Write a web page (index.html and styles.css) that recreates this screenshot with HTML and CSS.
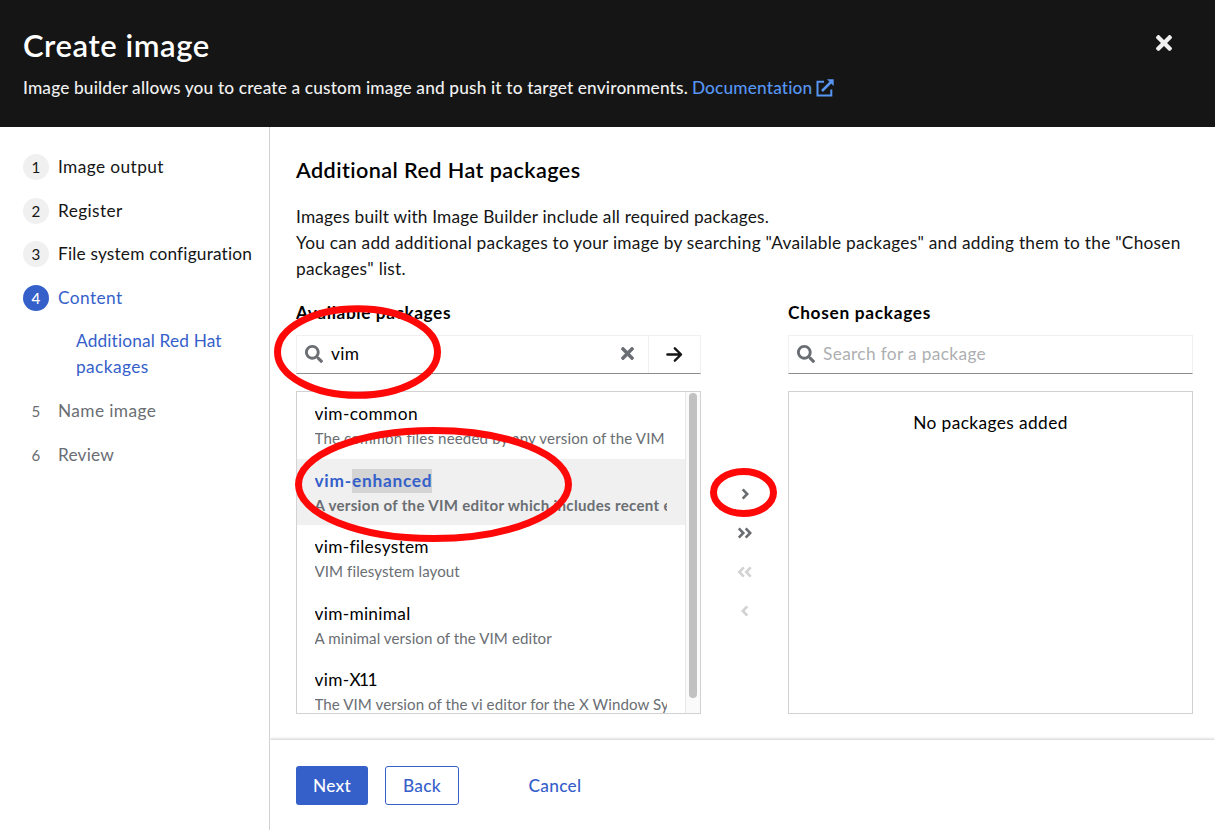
FILE: index.html
```html
<!DOCTYPE html>
<html lang="en">
<head>
<meta charset="utf-8">
<title>Create image</title>
<link rel="stylesheet" href="styles.css">
</head>
<body>
<svg class="defs" width="0" height="0">
  <symbol id="search" viewBox="0 0 512 512"><path d="M505 442.7L405.3 343c-4.5-4.5-10.6-7-17-7H372c27.6-35.3 44-79.7 44-128C416 93.1 322.9 0 208 0S0 93.1 0 208s93.1 208 208 208c48.3 0 92.7-16.4 128-44v16.3c0 6.4 2.5 12.5 7 17l99.7 99.7c9.4 9.4 24.6 9.4 33.9 0l28.3-28.3c9.4-9.4 9.4-24.6.1-34zM208 336c-70.7 0-128-57.2-128-128 0-70.7 57.2-128 128-128 70.7 0 128 57.2 128 128 0 70.7-57.2 128-128 128z"/></symbol>
  <symbol id="times" viewBox="0 80 352 352"><path d="M242.72 256l100.07-100.07c12.28-12.28 12.28-32.19 0-44.48l-22.24-22.24c-12.28-12.28-32.19-12.28-44.48 0L176 189.28 75.93 89.21c-12.28-12.28-32.19-12.28-44.48 0L9.21 111.45c-12.28 12.28-12.28 32.19 0 44.48L109.28 256 9.21 356.07c-12.28 12.28-12.28 32.19 0 44.48l22.24 22.24c12.28 12.28 32.2 12.28 44.48 0L176 322.72l100.07 100.07c12.28 12.28 32.2 12.28 44.48 0l22.24-22.24c12.28-12.28 12.28-32.19 0-44.48L242.72 256z"/></symbol>
</svg>
<div class="wizard">
  <header class="header">
    <div class="header-text">
      <h1 class="title">Create image</h1>
      <p class="description"><span class="desc-text">Image builder allows you to create a custom image and push it to target environments.</span><a class="doc-link"><span>Documentation</span><svg class="icon-external" viewBox="0 0 18 18"><path d="M8 2.7H1.5v13.8h13.8V10.500" fill="none" stroke="currentColor" stroke-width="2"/><path d="M6 12L15 3" fill="none" stroke="currentColor" stroke-width="2.500"/><path d="M11 .2h6.700v6.700z" fill="currentColor"/></svg></a></p>
    </div>
    <button class="close"><svg class="icon-close"><use href="#times"/></svg></button>
  </header>
  <div class="body">
    <nav class="nav">
      <ol class="steps">
        <li class="step"><span class="num">1</span><span class="label">Image output</span></li>
        <li class="step"><span class="num">2</span><span class="label">Register</span></li>
        <li class="step"><span class="num">3</span><span class="label long">File system configuration</span></li>
        <li class="step current"><span class="num">4</span><span class="label">Content</span></li>
        <li class="substep">Additional Red Hat<br><span class="label">packages</span></li>
        <li class="step disabled"><span class="num">5</span><span class="label">Name image</span></li>
        <li class="step disabled"><span class="num">6</span><span class="label long">Review</span></li>
      </ol>
    </nav>
    <div class="content">
      <main class="main">
        <h2 class="heading">Additional Red Hat packages</h2>
        <p class="intro">Images built with Image Builder include all required packages.<br><span class="instructions">You can add additional packages to your image by searching "Available packages" and adding them to the "Chosen<br>packages" list.</span></p>
        <div class="selector">
          <section class="pane">
            <h3 class="pane-title">Available packages</h3>
            <div class="search">
              <div class="search-field"><svg class="icon-search"><use href="#search"/></svg><span class="value">vim</span><svg class="icon-clear"><use href="#times"/></svg></div>
              <button class="go"><svg class="icon-arrow" viewBox="0 0 16 16"><path d="M1.300 8h12.500M8.300 2.200L14.200 8l-5.900 5.800" fill="none" stroke="currentColor" stroke-width="2.200" stroke-linecap="round" stroke-linejoin="round"/></svg></button>
            </div>
            <div class="list">
              <ul class="items">
                <li class="item"><span class="name wide">vim-common</span><span class="summary loose">The common files needed by any version of the VIM</span></li>
                <li class="item selected"><span class="name">vim-<mark class="mark">enhanced</mark></span><span class="summary">A version of the VIM editor which includes recent enhancements</span></li>
                <li class="item"><span class="name">vim-filesystem</span><span class="summary">VIM filesystem layout</span></li>
                <li class="item"><span class="name">vim-minimal</span><span class="summary">A minimal version of the VIM editor</span></li>
                <li class="item"><span class="name">vim-<span class="tight">X11</span></span><span class="summary">The VIM version of the vi editor for the X Window System</span></li>
              </ul>
              <div class="scrollbar"><div class="thumb"></div></div>
            </div>
          </section>
          <div class="controls">
            <svg class="control" viewBox="0 0 18 18"><path d="M6.700 4.300L11.200 9l-4.500 4.700"/></svg>
            <svg class="control" viewBox="0 0 18 18"><path d="M2.800 4.300L7.300 9l-4.500 4.700M9.700 4.300L14.200 9l-4.500 4.700"/></svg>
            <svg class="control off" viewBox="0 0 18 18"><path d="M7.800 4.300L3.300 9l4.500 4.700M14.700 4.300L10.200 9l4.500 4.700"/></svg>
            <svg class="control off" viewBox="0 0 18 18"><path d="M11.300 4.300L6.800 9l4.500 4.700"/></svg>
          </div>
          <section class="pane">
            <h3 class="pane-title chosen">Chosen packages</h3>
            <div class="search">
              <div class="search-field"><svg class="icon-search"><use href="#search"/></svg><span class="placeholder">Search for a package</span></div>
            </div>
            <div class="list"><p class="empty">No packages added</p></div>
          </section>
        </div>
      </main>
      <footer class="footer">
        <button class="btn primary">Next</button>
        <button class="btn secondary">Back</button>
        <button class="btn link">Cancel</button>
      </footer>
    </div>
  </div>
  <svg class="annotations" viewBox="0 0 1215 830">
    <ellipse cx="357.500" cy="352" rx="80" ry="43.300"/>
    <ellipse cx="433.500" cy="484.500" rx="135" ry="54"/>
    <ellipse cx="743.500" cy="492.500" rx="30" ry="21"/>
  </svg>
</div>
</body>
</html>
```
FILE: styles.css
```css
* { box-sizing: border-box; margin: 0; padding: 0; }
body { font-family: Lato, "Liberation Sans", sans-serif; font-size: 17.3px; line-height: 26px; color: #151515; background: #fff; letter-spacing: 0.3px; }
button { font: inherit; letter-spacing: inherit; background: none; border: 0; }
ul, ol { list-style: none; }
.defs { position: absolute; }
.wizard { position: relative; width: 1215px; height: 830px; display: flex; flex-direction: column; overflow: hidden; }
.header { height: 127px; flex: none; background: #151515; color: #fff; display: flex; justify-content: space-between; padding: 25px 43px 0 23px; }
.title { font-size: 31px; font-weight: 600; line-height: 40px; letter-spacing: 0.55px; }
.description { margin-top: 10px; display: flex; gap: 4px; color: #f0f0f0; font-weight: 500; white-space: nowrap; letter-spacing: 0.15px; }
.doc-link { color: #5795f2; display: flex; align-items: center; gap: 4px; letter-spacing: 0.15px; }
.icon-external { width: 18px; height: 18px; margin-bottom: 1px; }
.close { height: 16px; margin-top: 10px; color: #f0f0f0; }
.icon-close { display: block; width: 16px; height: 16px; fill: currentColor; }
.body { flex: 1; display: flex; min-height: 0; }
.nav { width: 270px; border-right: 1px solid #d2d2d2; padding: 27px 0 0 23px; }
.steps { display: flex; flex-direction: column; gap: 17.600px; white-space: nowrap; }
.step { display: flex; gap: 9px; }
.label { letter-spacing: 0.4px; }
.long { letter-spacing: 0.18px; }
.num { width: 26px; height: 26px; border-radius: 50%; background: #f0f0f0; text-align: center; font-size: 15.100px; letter-spacing: 0; }
.current, .substep { color: #3560ca; }
.current .num { background: #3560ca; color: #fff; font-weight: 500; }
.disabled { color: #6a6e73; }
.disabled .num { background: transparent; }
.substep { padding-left: 53px; letter-spacing: 0.15px; }
.content { flex: 1; display: flex; flex-direction: column; min-width: 0; }
.main { flex: 1; padding: 29px 22px 0 26px; white-space: nowrap; color: #000; }
.heading { font-size: 21.600px; line-height: 28px; font-weight: 600; letter-spacing: 0.42px; }
.intro { margin-top: 20px; color: #151515; letter-spacing: 0.17px; }
.instructions { letter-spacing: 0.245px; }
.selector { display: flex; margin-top: 18px; }
.pane { width: 405px; }
.pane-title { font-size: 17.300px; font-weight: 700; line-height: 26px; letter-spacing: 0.58px; }
.chosen { letter-spacing: 0.7px; }
.search { display: flex; margin-top: 9px; height: 39px; border: 1px solid #f0f0f0; border-bottom-color: #8a8d90; }
.search-field { flex: 1; display: flex; align-items: center; padding: 0 14px 2px 8px; }
.icon-search { width: 18px; height: 18px; fill: #6a6e73; margin-right: 8px; }
.icon-clear { width: 13px; height: 13px; fill: #6a6e73; margin-left: auto; }
.placeholder { color: #adafb2; letter-spacing: 0.35px; }
.go { width: 52px; padding-bottom: 1px; border-left: 1px solid #f0f0f0; color: #151515; display: flex; align-items: center; justify-content: center; }
.icon-arrow { width: 17px; height: 17px; }
.list { margin-top: 17px; height: 323px; border: 1px solid #d2d2d2; display: flex; overflow: hidden; }
.items { flex: 1; min-width: 0; }
.item { height: 66.600px; padding: 9px 18px 9px 17.500px; overflow: hidden; }
.name, .summary { display: block; overflow: hidden; }
.wide { letter-spacing: 0.4px; }
.tight { letter-spacing: -1.6px; }
.summary { font-size: 15.100px; line-height: 22.600px; color: #6a6e73; letter-spacing: 0.07px; }
.loose { letter-spacing: 0.14px; }
.selected { background: #f0f0f0; font-weight: 700; }
.selected .name { color: #3560ca; letter-spacing: 0.75px; }
.selected .summary { letter-spacing: 0.3px; }
.mark { display: inline-block; height: 24px; line-height: 24px; background: #d4d4d4; color: inherit; }
.scrollbar { width: 15px; background: #fafafa; border-left: 1px solid #e8e8e8; padding: 1px 3px; }
.thumb { width: 8px; height: 305px; border-radius: 4px; background: #c1c1c1; }
.controls { width: 87px; padding-top: 185px; display: flex; flex-direction: column; align-items: center; gap: 21px; }
.control { width: 18px; height: 18px; fill: none; stroke: #6a6e73; stroke-width: 2.600; }
.off { stroke: #d2d2d2; }
.empty { width: 100%; text-align: center; padding-top: 18px; letter-spacing: 0.4px; }
.footer { height: 90px; flex: none; display: flex; padding: 26px; box-shadow: 0 -1px 3px rgba(0,0,0,.2); clip-path: inset(-5px 0 0 0); }
.btn { height: 39px; border-radius: 3px; font-weight: 500; }
.primary { width: 72px; background: #3560ca; color: #fff; }
.secondary { width: 74px; margin-left: 17px; border: 1px solid #3560ca; color: #3560ca; }
.link { width: 90px; margin-left: 51px; color: #3560ca; }
.annotations { position: absolute; inset: 0; width: 1215px; height: 830px; fill: none; stroke: #ff0808; stroke-width: 7; pointer-events: none; }
```
